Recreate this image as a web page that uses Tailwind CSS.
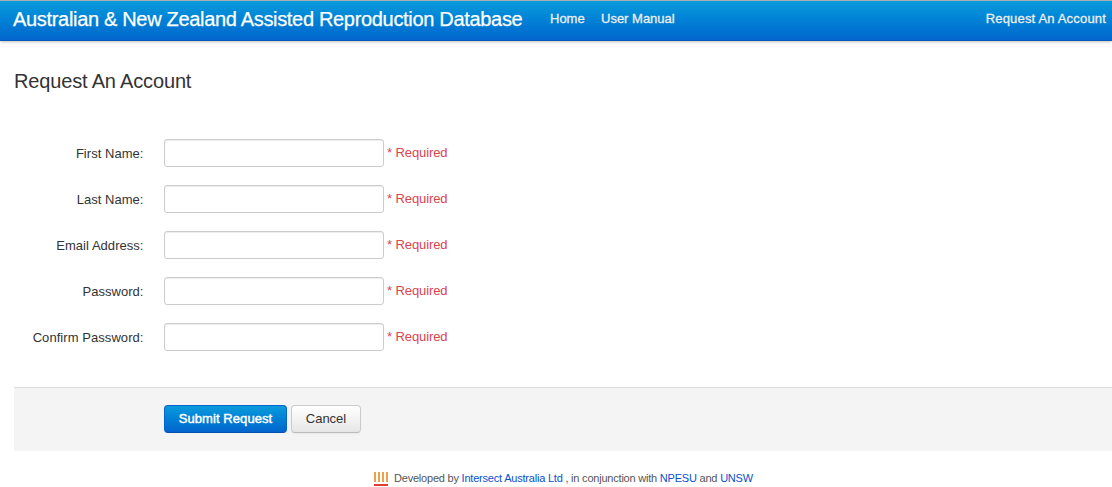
<!DOCTYPE html>
<html lang="en">
<head>
<meta charset="utf-8">
<title>Request An Account</title>
<script src="https://cdn.jsdelivr.net/npm/@tailwindcss/browser@4"></script>
</head>
<body class="h-[487px] overflow-hidden bg-white font-['Liberation_Sans',Arial,sans-serif] text-[13px] leading-[18px] text-[#333]">
<header class="flex h-[41px] items-start border-t border-[#a9b0b3] bg-linear-to-b from-[#0c9bdc] to-[#0464cd] pt-[9px] pr-[6px] pl-[13px] shadow-[0_1px_3px_rgba(0,0,0,0.25),inset_0_-1px_0_rgba(0,0,0,0.1)]">
  <a class="-mt-px w-[537px] text-[20px] leading-[20px] tracking-[-0.32px] whitespace-nowrap text-white [-webkit-text-stroke:0.25px_white]">Australian &amp; New Zealand Assisted Reproduction Database</a>
  <nav class="flex flex-1 text-[#eee] [-webkit-text-stroke:0.3px_#eee]">
    <a class="w-[51px]">Home</a>
    <a>User Manual</a>
    <a class="ml-auto tracking-[0.18px]">Request An Account</a>
  </nav>
</header>
<main class="pl-[14px]">
  <h1 class="pt-[28px] text-[20px] leading-[24px] tracking-[-0.16px]">Request An Account</h1>
  <form>
    <div class="flex flex-col gap-[18px] pt-[46px]">
      <div class="flex h-7"><label class="w-[130px] pt-[6px] pr-[0.5px] text-right tracking-[0.04px]">First Name:</label><input class="ml-5 h-7 w-[220px] rounded-[3px] border border-[#ccc] shadow-[inset_0_1px_1px_rgba(0,0,0,0.075)]"><span class="pt-[5px] pl-[3px] tracking-[-0.1px] text-[#d9444f]">* Required</span></div>
      <div class="flex h-7"><label class="w-[130px] pt-[6px] pr-[0.5px] text-right tracking-[0.04px]">Last Name:</label><input class="ml-5 h-7 w-[220px] rounded-[3px] border border-[#ccc] shadow-[inset_0_1px_1px_rgba(0,0,0,0.075)]"><span class="pt-[5px] pl-[3px] tracking-[-0.1px] text-[#d9444f]">* Required</span></div>
      <div class="flex h-7"><label class="w-[130px] pt-[6px] pr-[0.5px] text-right tracking-[0.04px]">Email Address:</label><input class="ml-5 h-7 w-[220px] rounded-[3px] border border-[#ccc] shadow-[inset_0_1px_1px_rgba(0,0,0,0.075)]"><span class="pt-[5px] pl-[3px] tracking-[-0.1px] text-[#d9444f]">* Required</span></div>
      <div class="flex h-7"><label class="w-[130px] pt-[6px] pr-[0.5px] text-right tracking-[0.04px]">Password:</label><input type="password" class="ml-5 h-7 w-[220px] rounded-[3px] border border-[#ccc] shadow-[inset_0_1px_1px_rgba(0,0,0,0.075)]"><span class="pt-[5px] pl-[3px] tracking-[-0.1px] text-[#d9444f]">* Required</span></div>
      <div class="flex h-7"><label class="w-[130px] pt-[6px] pr-[0.5px] text-right tracking-[0.06px]">Confirm Password:</label><input type="password" class="ml-5 h-7 w-[220px] rounded-[3px] border border-[#ccc] shadow-[inset_0_1px_1px_rgba(0,0,0,0.075)]"><span class="pt-[5px] pl-[3px] tracking-[-0.1px] text-[#d9444f]">* Required</span></div>
    </div>
    <div class="mt-9 flex h-16 gap-1 border-t border-[#ddd] bg-[#f4f4f4] pt-[17px] pl-[150px]">
      <button type="button" class="h-7 w-[123px] rounded-[4px] border border-[#0464cd] border-b-[#0350b0] bg-linear-to-b from-[#0c9bdc] to-[#0464cd] tracking-[0.08px] whitespace-nowrap text-white [-webkit-text-stroke:0.45px_white]">Submit Request</button>
      <button type="button" class="h-7 w-[70px] rounded-[4px] border border-[#ccc] border-b-[#bbb] bg-linear-to-b from-white to-[#e6e6e6] shadow-[0_1px_2px_rgba(0,0,0,0.05)]">Cancel</button>
    </div>
  </form>
</main>
<footer class="flex pt-[18px] pl-[374px] text-[11px] text-[#555]">
  <svg class="mt-[3px] mr-[6px] h-[14px] w-[14px]" viewBox="0 0 14 14"><path d="M1 0v10M5 0v10M9 0v10M13 0v10" stroke="#f0a04b" stroke-width="2"/><path d="M0 13h14" stroke="#e23b30" stroke-width="2"/></svg>
  <p class="tracking-[-0.21px] whitespace-nowrap">Developed by <a class="text-[#0a50d0]">Intersect Australia Ltd</a> , in conjunction with <a class="text-[#0a50d0]">NPESU</a> and <a class="text-[#0a50d0]">UNSW</a></p>
</footer>
</body>
</html>
